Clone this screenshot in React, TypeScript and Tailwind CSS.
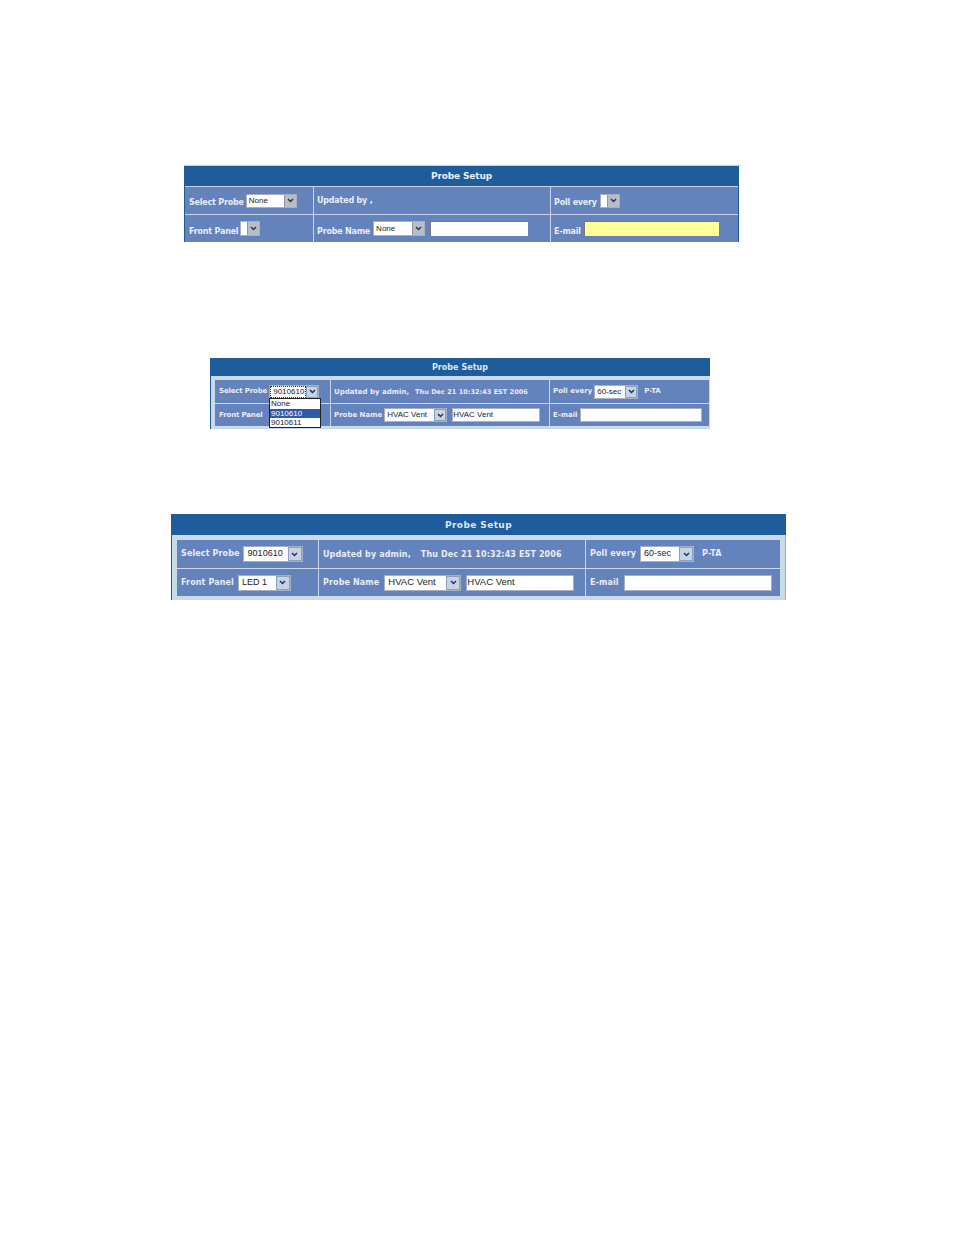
import React from "react";

const font = "font-['DejaVu_Sans',sans-serif]";

function Arrow({ cls }: { cls: string }) {
  return (
    <span className={`flex items-center justify-center shrink-0 ${cls}`}>
      <svg width="7" height="5" viewBox="0 0 7 5">
        <path d="M1 1 L3.5 3.5 L6 1" fill="none" stroke="#2c3442" strokeWidth="1.5" />
      </svg>
    </span>
  );
}

function Sel({ w, h, text, tc, arrow }: { w: string; h: string; text: string; tc: string; arrow: string }) {
  return (
    <span className={`flex items-stretch bg-white border border-[#a9b0bd] shrink-0 ${w} ${h}`}>
      <span className={`flex-1 flex items-center overflow-hidden whitespace-nowrap text-[#222] font-normal pl-[2px] font-['Liberation_Sans',sans-serif] ${tc}`}>{text}</span>
      <Arrow cls={arrow} />
    </span>
  );
}

function Label({ children, cls }: { children: React.ReactNode; cls: string }) {
  return <span className={`font-bold text-[#e8edf6] whitespace-nowrap ${cls}`}>{children}</span>;
}

function Panel1() {
  const l = "text-[8px] tracking-[-0.2px]";
  const a = "w-[12px] bg-[#b9bdc9] border-l border-[#8f95a5]";
  return (
    <section className="ml-[184px] w-[555px] h-[77px] flex flex-col">
      <div className="h-px shrink-0 w-[557px] bg-[#d0d0d0]" />
      <h2 className="h-[20px] shrink-0 bg-[#1e5c9b] flex items-center justify-center pt-[2px] text-[9px] font-bold text-[#e6eef8] tracking-[-0.15px]">Probe Setup</h2>
      <div className="flex-1 grid grid-cols-[129px_237px_187px] grid-rows-[27px_27px] gap-y-[1px] pt-[1px] bg-[#c5d3e6] border-l border-r border-[#1e5c9b]">
        <div className="bg-[#6482bb] flex items-center gap-[2px] pl-[4px] border-r border-[#c5d3e6]">
          <Label cls={`${l} pt-[4px]`}>Select Probe</Label>
          <Sel w="w-[51px]" h="h-[14px]" text="None" tc="text-[8px]" arrow={a} />
        </div>
        <div className="bg-[#6482bb] flex items-center pl-[3px] border-r border-[#c5d3e6]">
          <Label cls={`${l} text-[#d3dcee] pt-[1px]`}>Updated by ,</Label>
        </div>
        <div className="bg-[#6482bb] flex items-center gap-[3px] pl-[3px]">
          <Label cls={`${l} pt-[4px]`}>Poll every</Label>
          <Sel w="w-[20px]" h="h-[14px]" text="" tc="text-[8px]" arrow={a} />
        </div>
        <div className="bg-[#6482bb] flex items-center gap-[2px] pl-[4px] border-r border-[#c5d3e6]">
          <Label cls={`${l} pt-[6px]`}>Front Panel</Label>
          <Sel w="w-[20px]" h="h-[15px]" text="" tc="text-[8px]" arrow={a} />
        </div>
        <div className="bg-[#6482bb] flex items-center pl-[3px] border-r border-[#c5d3e6]">
          <Label cls={`${l} pt-[6px] mr-[3px]`}>Probe Name</Label>
          <Sel w="w-[52px]" h="h-[15px]" text="None" tc="text-[8px]" arrow={a} />
          <span className="ml-[5px] w-[98px] h-[15px] bg-white border-t border-l border-[#777]" />
        </div>
        <div className="bg-[#6482bb] flex items-center gap-[3px] pl-[3px]">
          <Label cls={`${l} pt-[6px]`}>E-mail</Label>
          <span className="w-[135px] h-[15px] bg-[#ffff99] border-t border-l border-[#777]" />
        </div>
      </div>
    </section>
  );
}

function Panel2() {
  const l = "text-[7px] tracking-[0px]";
  const t = "text-[7px] tracking-[-0.15px]";
  const a = "w-[12px] bg-[#c3d3ea] border border-[#8ca0bd]";
  return (
    <section className="relative ml-[210px] mt-[116px] w-[500px] h-[71px] flex flex-col">
      <h2 className="h-[18px] shrink-0 bg-[#1e5c9b] flex items-center justify-center pt-[2px] text-[8px] font-bold text-[#dbe6f3] tracking-[0.05px]">Probe Setup</h2>
      <div className="flex-1 bg-[#c9dbe6] border-l border-[#1e5c9b] pl-[4px] pr-[1px] pt-[4px] pb-[3px]">
        <div className="h-full grid grid-cols-[116px_219px_159px] grid-rows-[23px_22px] gap-y-[1px]">
          <div className="bg-[#6482bb] flex items-center pl-[4px] border-r border-[#c5d3e6]">
            <Label cls={`${t} mr-[2px]`}>Select Probe</Label>
            <Sel w="w-[50px]" h="h-[14px]" text="9010610" tc="text-[8px] border border-dotted border-[#333]" arrow={a} />
          </div>
          <div className="bg-[#6482bb] flex items-center pl-[3px] border-r border-[#c5d3e6]">
            <Label cls={`${l} tracking-[0.1px] mr-[6px] pt-[2px]`}>Updated by admin,</Label>
            <Label cls="text-[6.5px] tracking-[0.04px] pt-[2px]">Thu Dec 21 10:32:43 EST 2006</Label>
          </div>
          <div className="bg-[#6482bb] flex items-center pl-[3px]">
            <Label cls={`${l} mr-[2px]`}>Poll every</Label>
            <Sel w="w-[44px]" h="h-[14px]" text="60-sec" tc="text-[8px]" arrow={a} />
            <Label cls={`${l} ml-[6px]`}>P-TA</Label>
          </div>
          <div className="bg-[#6482bb] flex items-center pl-[4px] border-r border-[#c5d3e6]">
            <Label cls={t}>Front Panel</Label>
          </div>
          <div className="bg-[#6482bb] flex items-center pl-[3px] border-r border-[#c5d3e6]">
            <Label cls={`${l} mr-[2px]`}>Probe Name</Label>
            <Sel w="w-[63px]" h="h-[14px]" text="HVAC Vent" tc="text-[8px]" arrow={a} />
            <span className="ml-[5px] w-[88px] h-[14px] bg-white border border-[#a9b0bd] text-[8px] font-normal text-[#222] flex items-center whitespace-nowrap font-['Liberation_Sans',sans-serif]">HVAC Vent</span>
          </div>
          <div className="bg-[#6482bb] flex items-center pl-[3px]">
            <Label cls={`${l} mr-[2px]`}>E-mail</Label>
            <span className="w-[122px] h-[14px] bg-white border border-[#a9b0bd]" />
          </div>
        </div>
      </div>
      <ul className="absolute left-[59px] top-[40px] w-[52px] h-[30px] bg-white border border-[#222] text-[8px] leading-[9.5px] text-[#222] font-normal font-['Liberation_Sans',sans-serif]">
        <li className="pl-[1px]">None</li>
        <li className="pl-[1px] bg-[#2f5aa6] text-white">9010610</li>
        <li className="pl-[1px]">9010611</li>
      </ul>
    </section>
  );
}

function Panel3() {
  const l = "text-[8px] tracking-[0.12px]";
  const a = "w-[14px] bg-[#c3d3ea] border border-[#8ca0bd]";
  return (
    <section className="ml-[171px] mt-[85px] w-[615px] h-[86px] flex flex-col">
      <h2 className="h-[21px] shrink-0 bg-[#1e5c9b] flex items-center justify-center pt-[2px] text-[9px] font-bold text-[#dbe6f3] tracking-[0.4px]">Probe Setup</h2>
      <div className="flex-1 bg-[#c9dbe6] border-l border-r border-[#1e5c9b] border-r-[#8fb0d0] pl-[5px] pt-[5px] pb-[4px]">
        <div className="h-full w-[603px] grid grid-cols-[142px_267px_194px] grid-rows-[28px_27px] gap-y-[1px]">
          <div className="bg-[#6482bb] flex items-center pl-[4px] border-r border-[#c5d3e6]">
            <Label cls={`${l} mr-[3px]`}>Select Probe</Label>
            <Sel w="w-[60px]" h="h-[16px]" text="9010610" tc="text-[9px] pl-[4px]" arrow={a} />
          </div>
          <div className="bg-[#6482bb] flex items-center pl-[4px] border-r border-[#c5d3e6]">
            <Label cls={`${l} mr-[10px] pt-[2px]`}>Updated by admin,</Label>
            <Label cls={`${l} pt-[2px]`}>Thu Dec 21 10:32:43 EST 2006</Label>
          </div>
          <div className="bg-[#6482bb] flex items-center pl-[4px]">
            <Label cls={`${l} mr-[4px]`}>Poll every</Label>
            <Sel w="w-[54px]" h="h-[16px]" text="60-sec" tc="text-[9px] pl-[3px]" arrow={a} />
            <Label cls={`${l} ml-[8px]`}>P-TA</Label>
          </div>
          <div className="bg-[#6482bb] flex items-center pl-[4px] border-r border-[#c5d3e6]">
            <Label cls={`${l} mr-[4px]`}>Front Panel</Label>
            <Sel w="w-[53px]" h="h-[16px]" text="LED 1" tc="text-[9px] pl-[3px]" arrow={a} />
          </div>
          <div className="bg-[#6482bb] flex items-center pl-[4px] border-r border-[#c5d3e6]">
            <Label cls={`${l} mr-[5px]`}>Probe Name</Label>
            <Sel w="w-[77px]" h="h-[16px]" text="HVAC Vent" tc="text-[9.5px] pl-[3px]" arrow={a} />
            <span className="ml-[5px] w-[108px] h-[16px] bg-white border border-[#a9b0bd] text-[9.5px] font-normal text-[#222] flex items-center whitespace-nowrap font-['Liberation_Sans',sans-serif]">HVAC Vent</span>
          </div>
          <div className="bg-[#6482bb] flex items-center pl-[4px]">
            <Label cls={`${l} mr-[5px]`}>E-mail</Label>
            <span className="w-[148px] h-[16px] bg-white border border-[#a9b0bd]" />
          </div>
        </div>
      </div>
    </section>
  );
}

export default function App() {
  return (
    <main className={`w-[954px] h-[1235px] bg-white pt-[165px] overflow-hidden ${font}`}>
      <Panel1 />
      <Panel2 />
      <Panel3 />
    </main>
  );
}
